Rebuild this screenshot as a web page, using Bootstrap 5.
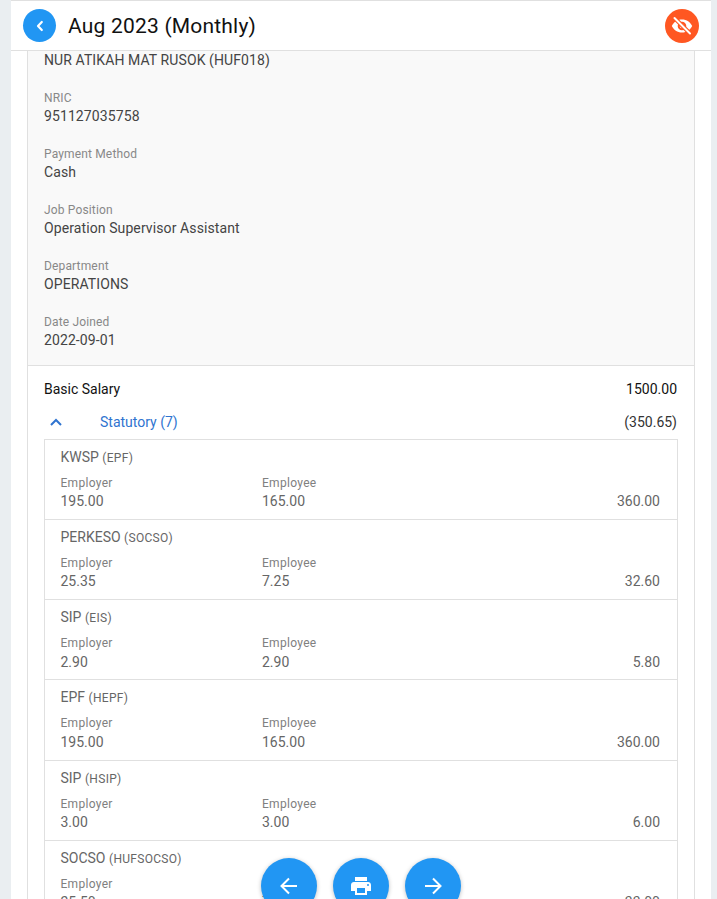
<!DOCTYPE html>
<html lang="en">
<head>
<meta charset="utf-8">
<title>Payslip</title>
<link rel="stylesheet" href="https://cdn.jsdelivr.net/npm/bootstrap@5.3.0/dist/css/bootstrap.min.css">
<style>
html,body{height:899px;overflow:hidden;}
body{background:#eaeef1;font-family:Roboto,"Liberation Sans",sans-serif;font-size:14px;color:#333;}
.sheet{margin:0 6px 0 11px;width:700px;height:899px;background:#fff;border-top:1px solid #e0e0e0;overflow:hidden;}
.topbar{height:50px;border-bottom:1px solid #e0e0e0;padding:0 12px;}
.round-btn{width:33px;height:33px;border-radius:50%;background:#2196f3;flex:none;}
.round-alert{width:34px;height:34px;background:#ff5722;}
.page-title{font-size:21px;line-height:24px;color:#111;margin:0 0 0 12px;font-weight:400;letter-spacing:.2px;}
.outer{margin:0 16px;border-left:1px solid #e0e0e0;border-right:1px solid #e0e0e0;}
.info{background:#f9f9f9;border-bottom:1px solid #e0e0e0;padding:0 16px;height:315px;}
.info-name{line-height:18px;margin-bottom:21px;letter-spacing:.1px;color:#444;}
.info-item{height:56px;}
.cap{font-size:12px;line-height:16px;color:#888;letter-spacing:.15px;}
.val{line-height:20px;color:#444;letter-spacing:.1px;}
.pay{padding:13px 16px 0;}
.pay-row{height:20px;line-height:20px;color:#111;padding-right:1px;}
.stat-row{height:20px;line-height:20px;margin-top:13px;margin-bottom:6.8px;padding-right:1px;}
.chev{width:56px;flex:none;padding-left:5px;}
.stat-link{color:#2f74d0;}
.stat-total{color:#333;}
.stat-box{border:1px solid #e0e0e0;border-bottom:0;}
.stat-item{height:80.2px;border-bottom:1px solid #e0e0e0;padding:7px 17px 0 15.5px;position:relative;}
.stat-name{line-height:20px;color:#666;margin-bottom:7px;}
.stat-name span{font-size:12px;letter-spacing:.3px;}
.stat-cols{display:flex;align-items:flex-end;}
.stat-col{width:201.500px;flex:none;}
.stat-col .cap{color:#808080;line-height:16.4px;letter-spacing:.3px;}
.stat-col .val{color:#666;line-height:20px;letter-spacing:0;}
.stat-sum{margin-left:auto;line-height:20px;color:#666;}
.fabs{position:fixed;left:261px;top:858px;gap:16px;}
.fab-btn{width:56px;height:56px;border-radius:50%;background:#2196f3;box-shadow:0 1px 4px rgba(0,0,0,.25);flex:none;padding:0;border:0;}
</style>
</head>
<body>
<div class="sheet">
  <div class="topbar d-flex align-items-center">
    <div class="round-btn d-flex align-items-center justify-content-center">
      <svg width="14" height="14" viewBox="0 0 14 14" fill="none" stroke="#fff" stroke-width="2.2" stroke-linecap="round" stroke-linejoin="round"><path d="M8.800 3 5 7l3.800 4"/></svg>
    </div>
    <h1 class="page-title">Aug 2023 (Monthly)</h1>
    <div class="round-btn round-alert ms-auto d-flex align-items-center justify-content-center">
      <svg width="24" height="24" viewBox="0 0 24 24" fill="#fff"><path d="M12 5.500c-4.600 0-8.500 2.700-10.200 6.500 1.700 3.800 5.600 6.500 10.200 6.500s8.500-2.700 10.200-6.500C20.500 8.200 16.600 5.500 12 5.500zm0 10.800a4.300 4.300 0 1 1 0-8.600 4.300 4.300 0 0 1 0 8.600z"/><circle cx="12" cy="12" r="2.300"/><path d="M4 3.500 20.500 20" stroke="#ff5722" stroke-width="4.200"/><path d="M4.500 4 20 19.500" stroke="#fff" stroke-width="2" stroke-linecap="round"/></svg>
    </div>
  </div>
  <div class="outer">
    <div class="info">
      <div class="info-name">NUR ATIKAH MAT RUSOK (HUF018)</div>
      <div class="info-item"><div class="cap">NRIC</div><div class="val">951127035758</div></div>
      <div class="info-item"><div class="cap">Payment Method</div><div class="val">Cash</div></div>
      <div class="info-item"><div class="cap">Job Position</div><div class="val">Operation Supervisor Assistant</div></div>
      <div class="info-item"><div class="cap">Department</div><div class="val">OPERATIONS</div></div>
      <div class="info-item"><div class="cap">Date Joined</div><div class="val">2022-09-01</div></div>
    </div>
    <div class="pay">
      <div class="pay-row d-flex justify-content-between"><span>Basic Salary</span><span>1500.00</span></div>
      <div class="stat-row d-flex align-items-center">
        <div class="chev"><svg class="d-block" width="14" height="10" viewBox="0 0 14 10" fill="none" stroke="#2f74d0" stroke-width="2"><path d="M2 8 7 3l5 5"/></svg></div>
        <span class="stat-link">Statutory (7)</span>
        <span class="stat-total ms-auto">(350.65)</span>
      </div>
      <div class="stat-box">
        <div class="stat-item"><div class="stat-name">KWSP <span>(EPF)</span></div><div class="stat-cols"><div class="stat-col"><div class="cap">Employer</div><div class="val">195.00</div></div><div class="stat-col"><div class="cap">Employee</div><div class="val">165.00</div></div><div class="stat-sum">360.00</div></div></div>
        <div class="stat-item"><div class="stat-name">PERKESO <span>(SOCSO)</span></div><div class="stat-cols"><div class="stat-col"><div class="cap">Employer</div><div class="val">25.35</div></div><div class="stat-col"><div class="cap">Employee</div><div class="val">7.25</div></div><div class="stat-sum">32.60</div></div></div>
        <div class="stat-item"><div class="stat-name">SIP <span>(EIS)</span></div><div class="stat-cols"><div class="stat-col"><div class="cap">Employer</div><div class="val">2.90</div></div><div class="stat-col"><div class="cap">Employee</div><div class="val">2.90</div></div><div class="stat-sum">5.80</div></div></div>
        <div class="stat-item"><div class="stat-name">EPF <span>(HEPF)</span></div><div class="stat-cols"><div class="stat-col"><div class="cap">Employer</div><div class="val">195.00</div></div><div class="stat-col"><div class="cap">Employee</div><div class="val">165.00</div></div><div class="stat-sum">360.00</div></div></div>
        <div class="stat-item"><div class="stat-name">SIP <span>(HSIP)</span></div><div class="stat-cols"><div class="stat-col"><div class="cap">Employer</div><div class="val">3.00</div></div><div class="stat-col"><div class="cap">Employee</div><div class="val">3.00</div></div><div class="stat-sum">6.00</div></div></div>
        <div class="stat-item"><div class="stat-name">SOCSO <span>(HUFSOCSO)</span></div><div class="stat-cols"><div class="stat-col"><div class="cap">Employer</div><div class="val">25.50</div></div><div class="stat-col"><div class="cap">Employee</div><div class="val">7.50</div></div><div class="stat-sum">33.00</div></div></div>
      </div>
    </div>
  </div>
</div>
<div class="fabs d-flex">
  <button class="fab-btn d-flex align-items-center justify-content-center" aria-label="Previous"><svg width="24" height="24" viewBox="0 0 24 24" fill="none" stroke="#fff" stroke-width="2"><path d="M20 12H5M12 4.500 4.500 12l7.500 7.500"/></svg></button>
  <button class="fab-btn d-flex align-items-center justify-content-center" aria-label="Print"><svg width="24" height="24" viewBox="0 0 24 24" fill="#fff"><path d="M19 8H5c-1.700 0-3 1.300-3 3v6h4v4h12v-4h4v-6c0-1.700-1.300-3-3-3zm-3 11H8v-5h8v5zm3-7a1 1 0 1 1 0-2 1 1 0 0 1 0 2zM18 3H6v4h12V3z"/></svg></button>
  <button class="fab-btn d-flex align-items-center justify-content-center" aria-label="Next"><svg width="24" height="24" viewBox="0 0 24 24" fill="none" stroke="#fff" stroke-width="2"><path d="M4 12h15M12 4.500 19.500 12 12 19.500"/></svg></button>
</div>
<script src="https://cdn.jsdelivr.net/npm/bootstrap@5.3.0/dist/js/bootstrap.bundle.min.js"></script>
</body>
</html>
